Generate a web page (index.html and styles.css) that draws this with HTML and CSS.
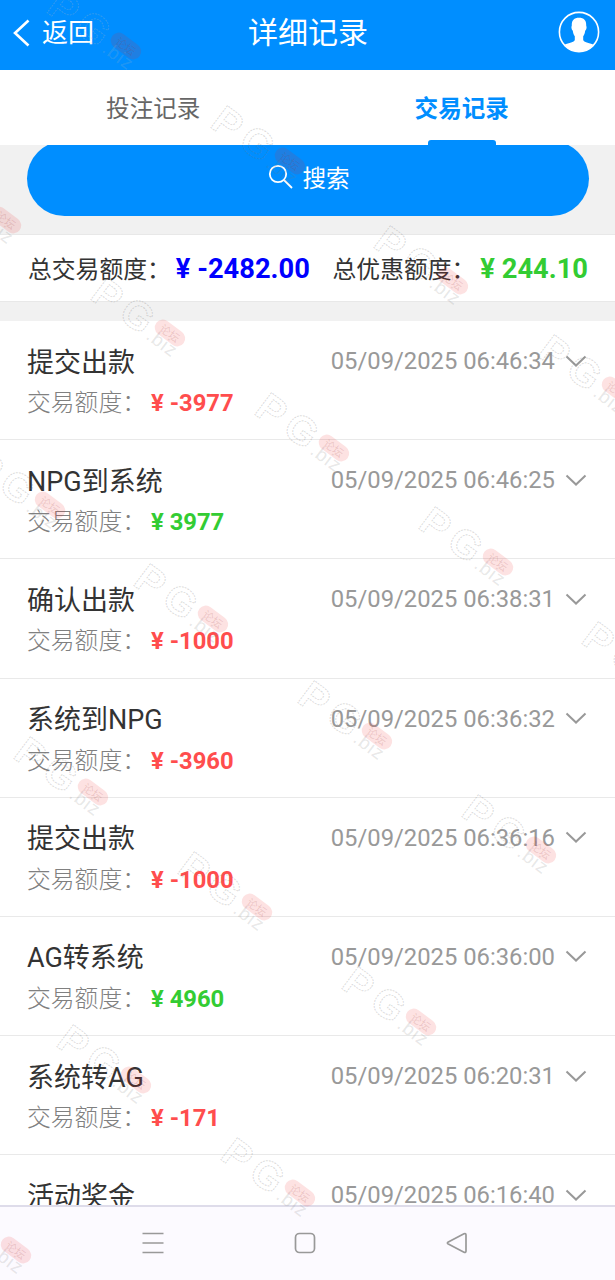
FILE: index.html
```html
<!DOCTYPE html>
<html lang="zh-CN">
<head>
    <meta charset="UTF-8">
    <meta name="viewport" content="width=device-width, initial-scale=1.0">
    <title>详细记录</title>
    <link rel="stylesheet" href="styles.css">
</head>
<body>
    <div class="app">
        <header class="header">
            <a class="back" href="#">
                <svg width="18" height="30" viewBox="0 0 18 30"><path d="M15.5 2.5 L2 15 L15.5 27.5"/></svg>
                <span>返回</span>
            </a>
            <h1>详细记录</h1>
            <svg class="avatar" width="42" height="42" viewBox="0 0 42 42">
                <circle cx="21" cy="21" r="19.6"/>
                <path d="M21 6.800c-4.800 0-7.500 2.500-7.200 7.700 0 .8-.6 1.200-.3 2.600.2 1.500.8 2.100 1.300 2.700.3 2.300 1 4.300 2 5.500v3.800c-.6 2.200-5.700 3-10.400 4.700C9.800 38.600 15 40.500 21 40.500s11.200-1.900 14.600-6.700c-4.700-1.700-9.800-2.500-10.400-4.700v-3.800c1-1.200 1.700-3.200 2-5.500.5-.6 1.100-1.200 1.300-2.700.3-1.400-.3-1.800-.3-2.600.3-5.200-2.400-7.700-7.200-7.700z"/>
            </svg>
        </header>

        <nav class="tabs">
            <a class="tab" href="#">投注记录</a>
            <a class="tab active" href="#">交易记录</a>
        </nav>

        <div class="search">
            <button class="search-btn" type="button">
                <svg width="26" height="26" viewBox="0 0 26 26"><circle cx="10" cy="10" r="8.200"/><path d="M16 16 L24 24"/></svg>
                <span>搜索</span>
            </button>
        </div>

        <div class="summary">
            <div><span class="label">总交易额度：</span><b class="blue">¥ -2482.00</b></div>
            <div><span class="label">总优惠额度：</span><b class="green">¥ 244.10</b></div>
        </div>

        <ul class="list">
            <li class="item">
                <div class="row"><h2>提交出款</h2><time>05/09/2025 06:46:34</time><svg class="arrow" viewBox="0 0 22 13"><path d="M1.500 1.500 L11 10.500 L20.500 1.500"/></svg></div>
                <p>交易额度：<b class="red">¥ -3977</b></p>
            </li>
            <li class="item">
                <div class="row"><h2>NPG到系统</h2><time>05/09/2025 06:46:25</time><svg class="arrow" viewBox="0 0 22 13"><path d="M1.500 1.500 L11 10.500 L20.500 1.500"/></svg></div>
                <p>交易额度：<b class="green">¥ 3977</b></p>
            </li>
            <li class="item">
                <div class="row"><h2>确认出款</h2><time>05/09/2025 06:38:31</time><svg class="arrow" viewBox="0 0 22 13"><path d="M1.500 1.500 L11 10.500 L20.500 1.500"/></svg></div>
                <p>交易额度：<b class="red">¥ -1000</b></p>
            </li>
            <li class="item">
                <div class="row"><h2>系统到NPG</h2><time>05/09/2025 06:36:32</time><svg class="arrow" viewBox="0 0 22 13"><path d="M1.500 1.500 L11 10.500 L20.500 1.500"/></svg></div>
                <p>交易额度：<b class="red">¥ -3960</b></p>
            </li>
            <li class="item">
                <div class="row"><h2>提交出款</h2><time>05/09/2025 06:36:16</time><svg class="arrow" viewBox="0 0 22 13"><path d="M1.500 1.500 L11 10.500 L20.500 1.500"/></svg></div>
                <p>交易额度：<b class="red">¥ -1000</b></p>
            </li>
            <li class="item">
                <div class="row"><h2>AG转系统</h2><time>05/09/2025 06:36:00</time><svg class="arrow" viewBox="0 0 22 13"><path d="M1.500 1.500 L11 10.500 L20.500 1.500"/></svg></div>
                <p>交易额度：<b class="green">¥ 4960</b></p>
            </li>
            <li class="item">
                <div class="row"><h2>系统转AG</h2><time>05/09/2025 06:20:31</time><svg class="arrow" viewBox="0 0 22 13"><path d="M1.500 1.500 L11 10.500 L20.500 1.500"/></svg></div>
                <p>交易额度：<b class="red">¥ -171</b></p>
            </li>
            <li class="item">
                <div class="row"><h2>活动奖金</h2><time>05/09/2025 06:16:40</time><svg class="arrow" viewBox="0 0 22 13"><path d="M1.500 1.500 L11 10.500 L20.500 1.500"/></svg></div>
            </li>
        </ul>

        <footer class="navbar">
            <svg width="22" height="22" viewBox="0 0 22 22"><path d="M.5 1.500H21.500M.5 11H21.500M.5 20.500H21.500"/></svg>
            <svg width="22" height="22" viewBox="0 0 22 22"><rect x="1.500" y="1.500" width="19" height="19" rx="4"/></svg>
            <svg width="22" height="22" viewBox="0 0 22 22"><path d="M18 1.800 L2.300 9.900 Q.5 11 2.300 12.100 L18 20.200 Q20 21 20 19 V3 Q20 1 18 1.800Z"/></svg>
        </footer>

        <!-- watermark layer, placed by the centre of the red badge -->
        <svg class="watermark" width="615" height="1280" viewBox="0 0 615 1280">
            <defs>
                <g id="wm">
                    <g transform="rotate(37)">
                        <text class="wm-big" x="-86" y="21">P</text>
                        <text class="wm-big" x="-52" y="19">G</text>
                        <text class="wm-small" x="-17" y="19">.biz</text>
                        <rect class="wm-badge" x="-17" y="-8" width="34" height="16" rx="8"/>
                        <text class="wm-cn" x="-11" y="4.500">论坛</text>
                    </g>
                </g>
            </defs>
            <use class="on-blue" href="#wm" x="126" y="46"/>
            <use href="#wm" x="290" y="161"/>
            <use href="#wm" x="453" y="281"/>
            <use href="#wm" x="617" y="390"/>
            <use href="#wm" x="6" y="220"/>
            <use href="#wm" x="170" y="333"/>
            <use href="#wm" x="334" y="448"/>
            <use href="#wm" x="498" y="562"/>
            <use href="#wm" x="661" y="677"/>
            <use href="#wm" x="50" y="505"/>
            <use href="#wm" x="213" y="619"/>
            <use href="#wm" x="377" y="736"/>
            <use href="#wm" x="541" y="850"/>
            <use href="#wm" x="93" y="792"/>
            <use href="#wm" x="257" y="907"/>
            <use href="#wm" x="421" y="1022"/>
            <use href="#wm" x="136" y="1080"/>
            <use href="#wm" x="300" y="1193"/>
            <use href="#wm" x="16" y="1250"/>
        </svg>
    </div>
</body>
</html>
```
FILE: styles.css
```css
* {
    margin: 0;
    padding: 0;
    box-sizing: border-box;
}

body {
    font-family: Roboto, "Noto Sans CJK SC", sans-serif;
    color: #333;
    background: #f1f1f1;
}

a {
    color: inherit;
    text-decoration: none;
}

.app {
    position: relative;
    display: flex;
    flex-direction: column;
    width: 615px;
    height: 1280px;
    overflow: hidden;
}

.header {
    display: grid;
    grid-template-columns: 1fr auto 1fr;
    align-items: center;
    height: 70px;
    flex: none;
    padding: 0 15px 6px 13px;
    background: #008eff;
    color: #fff;
}

.header h1 {
    padding: 2px 0 0 3px;
    font-size: 30px;
    font-weight: 400;
    line-height: 40px;
}

.back {
    display: flex;
    align-items: center;
    gap: 11px;
    padding-top: 2px;
    font-size: 26px;
    line-height: 36px;
}

.back svg {
    fill: none;
    stroke: #fff;
    stroke-width: 2.6;
}

.avatar {
    justify-self: end;
    fill: #fff;
}

.avatar circle {
    fill: none;
    stroke: #fff;
    stroke-width: 1.6;
}

.tabs {
    display: flex;
    flex: none;
    height: 75px;
    background: #fff;
}

.tab {
    display: flex;
    flex: 1;
    flex-direction: column;
    align-items: center;
    padding-top: 21px;
    font-size: 23.6px;
    line-height: 36px;
    color: #666;
}

.tab.active {
    padding-left: 2px;
    color: #008eff;
    font-weight: 700;
}

.tab.active::after {
    content: "";
    width: 68px;
    height: 5px;
    margin-top: auto;
    border-radius: 3px 3px 0 0;
    background: #008eff;
}

/* the list is scrolled, so the button starts under the tabs */
.search {
    display: flex;
    flex: none;
    align-items: flex-end;
    height: 89px;
    padding: 0 26px 18px 27px;
    overflow: hidden;
}

.search-btn {
    display: flex;
    flex: 1;
    justify-content: center;
    align-items: center;
    gap: 8px;
    height: 75px;
    padding: 0 0 3px 2px;
    border: none;
    border-radius: 38px;
    background: #008eff;
    color: #fff;
    font-family: inherit;
    font-size: 23.6px;
}

.search-btn svg {
    fill: none;
    stroke: #fff;
    stroke-width: 1.8;
}

.summary {
    display: flex;
    flex: none;
    justify-content: space-between;
    height: 68px;
    padding: 0 27px 0 28px;
    border-top: 1px solid #e8e8e8;
    border-bottom: 1px solid #e8e8e8;
    background: #fff;
    line-height: 68px;
    white-space: nowrap;
}

.summary .label {
    font-size: 23.8px;
}

.summary b {
    margin-left: 5px;
    font-size: 27.3px;
}

.list {
    flex: 1;
    min-height: 0;
    margin-top: 19px;
    overflow: hidden;
    background: #fff;
    list-style: none;
}

.item {
    height: 119.2px;
    padding: 20px 28px 0 27px;
    border-bottom: 1px solid #e9e9e9;
}

.row {
    display: flex;
    align-items: center;
    height: 40px;
}

.row h2 {
    flex: 1;
    padding-bottom: 2px;
    font-size: 27px;
    font-weight: 400;
}

.row time {
    color: #999;
    font-size: 23.8px;
}

.arrow {
    width: 22px;
    height: 13px;
    margin-left: 10px;
    fill: none;
    stroke: #999;
    stroke-width: 2;
}

.item p {
    height: 42px;
    color: #808080;
    font-size: 23.8px;
    font-weight: 300;
    line-height: 45px;
}

.item b {
    margin-left: 5px;
    font-weight: 700;
}

.blue {
    color: #00f;
}

.green {
    color: #3c3;
}

.red {
    color: #ff4d4d;
}

.navbar {
    display: flex;
    flex: none;
    justify-content: space-between;
    align-items: center;
    height: 75px;
    padding: 0 147px 2px 142px;
    border-top: 2px solid #dedcea;
    background: #fcfaff;
}

.navbar svg {
    fill: none;
    stroke: #999;
    stroke-width: 1.7;
}

.watermark {
    position: absolute;
    top: 0;
    left: 0;
    color: #777;
    pointer-events: none;
}

.watermark .on-blue {
    color: #bbb;
}

.wm-big {
    font-family: "Liberation Sans", sans-serif;
    font-size: 40px;
    font-weight: 700;
    fill: none;
    stroke: currentColor;
    stroke-opacity: 0.27;
    stroke-width: 1;
    stroke-dasharray: 2 1;
}

.wm-small {
    font-family: "Liberation Sans", sans-serif;
    font-size: 19px;
    letter-spacing: 1px;
    fill: currentColor;
    fill-opacity: 0.18;
}

.wm-badge {
    fill: #e22;
    fill-opacity: 0.13;
}

.wm-cn {
    font-family: "Noto Sans CJK SC", sans-serif;
    font-size: 11px;
    fill: #933;
    fill-opacity: 0.18;
}
```
